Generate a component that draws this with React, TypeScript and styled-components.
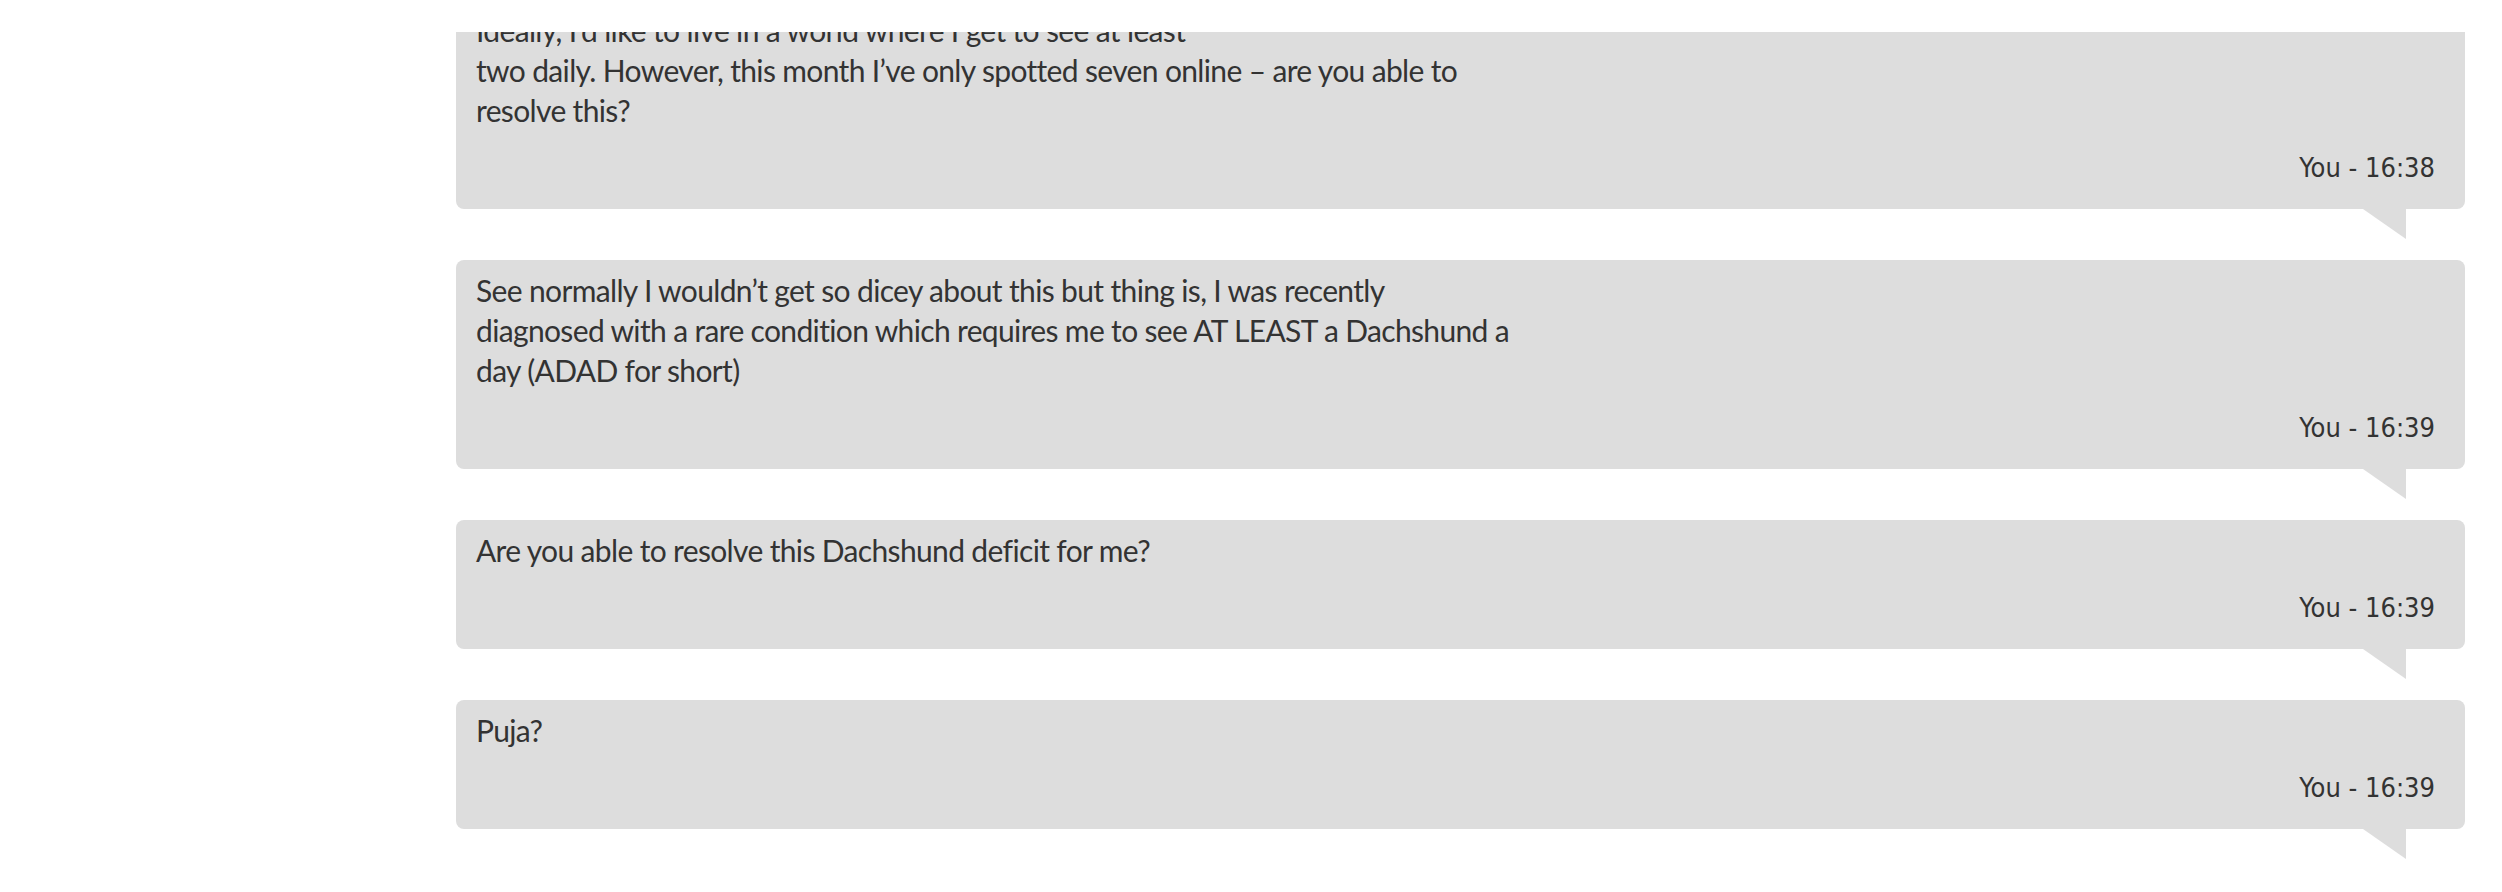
import styled, { createGlobalStyle } from "styled-components";

const GlobalStyle = createGlobalStyle`
  html, body {
    margin: 0;
    padding: 0;
    background: #fff;
  }
  body {
    font-family: Lato, "Liberation Sans", sans-serif;
    color: #333;
  }
`;

const Page = styled.div`
  display: grid;
  grid-template-columns: 456px 1fr 37px;
  grid-template-rows: 32px 860px;
  width: 2502px;
  height: 892px;
  overflow: hidden;
`;

const TopBar = styled.header`
  grid-column: 1 / -1;
  background: #fff;
`;

const Sidebar = styled.aside`
  background: #fff;
`;

const Thread = styled.main`
  overflow: hidden;
`;

const MessageList = styled.ul`
  list-style: none;
  margin: -32px 0 0;
  padding: 0;
  display: flex;
  flex-direction: column;
  gap: 51px;
`;

const Bubble = styled.li`
  position: relative;
  background: #dddddd;
  border-radius: 8px;
  padding: 10px 30px 26px 20px;

  &::after {
    content: "";
    position: absolute;
    top: 100%;
    right: 59px;
    width: 0;
    height: 0;
    border-top: 30px solid #dddddd;
    border-left: 43px solid transparent;
  }
`;

const Body = styled.p`
  margin: 0;
  font-family: Lato, "Liberation Sans", sans-serif;
  font-size: 30px;
  line-height: 40px;
  letter-spacing: -0.65px;
  white-space: nowrap;
  color: #333;
`;

const Meta = styled.div`
  margin-top: 23px;
  text-align: right;
  font-family: "DejaVu Sans Condensed", "DejaVu Sans", sans-serif;
  font-size: 27px;
  line-height: 30px;
  color: #333;
`;

type Message = {
  id: number;
  lines: string[];
  author: string;
  time: string;
};

const messages: Message[] = [
  {
    id: 1,
    lines: [
      "Ideally, I\u2019d like to live in a world where I get to see at least",
      "two daily. However, this month I\u2019ve only spotted seven online \u2013 are you able to",
      "resolve this?",
    ],
    author: "You",
    time: "16:38",
  },
  {
    id: 2,
    lines: [
      "See normally I wouldn\u2019t get so dicey about this but thing is, I was recently",
      "diagnosed with a rare condition which requires me to see AT LEAST a Dachshund a",
      "day (ADAD for short)",
    ],
    author: "You",
    time: "16:39",
  },
  {
    id: 3,
    lines: ["Are you able to resolve this Dachshund deficit for me?"],
    author: "You",
    time: "16:39",
  },
  {
    id: 4,
    lines: ["Puja?"],
    author: "You",
    time: "16:39",
  },
];

function App() {
  return (
    <>
      <GlobalStyle />
      <Page>
        <TopBar />
        <Sidebar />
        <Thread>
          <MessageList>
            {messages.map((m) => (
              <Bubble key={m.id}>
                <Body>
                  {m.lines.map((line, i) => (
                    <span key={i}>
                      {i > 0 && <br />}
                      {line}
                    </span>
                  ))}
                </Body>
                <Meta>
                  {m.author} - {m.time}
                </Meta>
              </Bubble>
            ))}
          </MessageList>
        </Thread>
      </Page>
    </>
  );
}

export default App;
